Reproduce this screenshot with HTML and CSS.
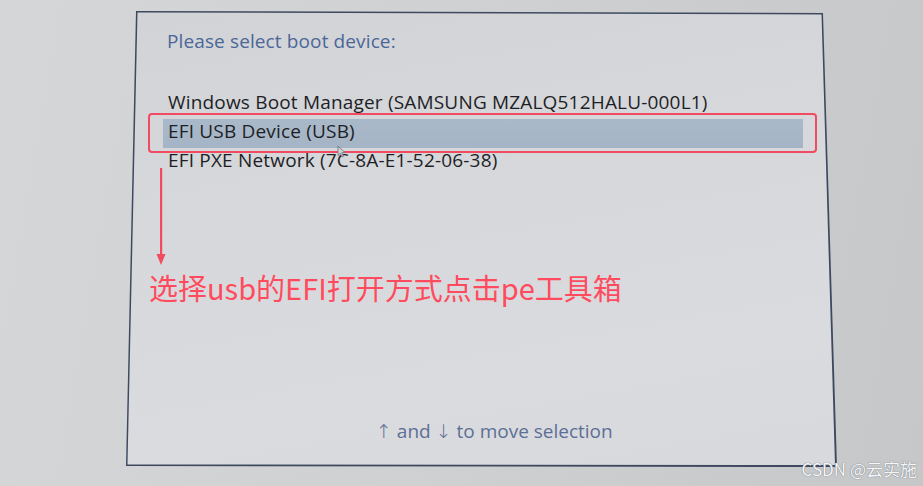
FILE: index.html
```html
<!DOCTYPE html>
<html lang="zh-CN">
<head>
<meta charset="utf-8">
<title>Boot device</title>
<link rel="stylesheet" href="styles.css">
</head>
<body>
<div class="screen">
  <div class="panel">
    <div class="title">Please select boot device:</div>
    <div class="list">
      <div class="item">Windows Boot Manager (SAMSUNG MZALQ512HALU-000L1)</div>
      <div class="item sel">EFI USB Device (USB)</div>
      <div class="item">EFI PXE Network (7C-8A-E1-52-06-38)</div>
    </div>
    <div class="note">选择usb的EFI打开方式点击pe工具箱</div>
    <div class="hint"><span class="arr">↑</span> and <span class="arr">↓</span> to move selection</div>

    <div class="redbox"></div>
    <svg class="redarrow" width="12" height="98" viewBox="0 0 12 98">
      <rect x="5" y="0" width="2.2" height="88" fill="#f24a5f"/>
      <polygon points="1.5,86 10.5,86 6,97" fill="#f24a5f"/>
    </svg>
    <svg class="cursor" width="9" height="13" viewBox="0 0 9 13">
      <path d="M1 1 L1 10.5 L3.3 8.4 L5 12 L6.4 11.3 L4.8 7.8 L8 7.6 Z" fill="#cfd3da" stroke="#6f7684" stroke-width="0.9" stroke-linejoin="round"/>
    </svg>
  </div>
</div>
<div class="watermark">CSDN @云实施</div>
</body>
</html>
```

FILE: styles.css
```css
html, body {
  margin: 0;
  padding: 0;
}
body {
  width: 923px;
  height: 486px;
  overflow: hidden;
  position: relative;
  background: linear-gradient(100deg, #d5d6d8 0%, #d0d1d3 45%, #c6c7c9 100%);
  font-family: "Open Sans", "Noto Sans", sans-serif;
}
.screen {
  padding: 11px 0 0 126px;
}
.panel {
  position: relative;
  width: 711px;
  height: 456px;
  box-sizing: border-box;
  padding-left: 42px;
  display: flex;
  flex-direction: column;
}
.panel::before {
  content: "";
  position: absolute;
  inset: 0;
  background: #3e4960;
  clip-path: polygon(10px 0, 697px 2px, 711px 456px, 0 455px);
  z-index: 0;
}
.panel::after {
  content: "";
  position: absolute;
  inset: 0;
  background: linear-gradient(170deg, #d2d3d6 0%, #d7d8db 40%, #dadbde 75%, #d8d9dc 100%);
  clip-path: polygon(11.5px 1.5px, 695.5px 3.5px, 709px 454px, 1.5px 453.5px);
  z-index: 0;
}
.panel > * {
  position: relative;
  z-index: 1;
}
.title {
  margin-top: 18px;
  font-size: 19px;
  letter-spacing: 0.12px;
  line-height: 24px;
  color: #4b6798;
  margin-left: -1px;
}
.list {
  margin-top: 35px;
}
.item {
  height: 29px;
  line-height: 29px;
  font-size: 19px;
  letter-spacing: 0.18px;
  color: #1e1f26;
  white-space: nowrap;
}
.item.sel {
  margin-left: -5px;
  padding-left: 5px;
  width: 635px;
  background: linear-gradient(to bottom, transparent 2px, #a9b9c9 2px, #a5b5c6 100%);
  box-shadow: 0 2px 0 0 #a5b5c6;
}
.note {
  margin-top: 94px;
  margin-left: -19px;
  font-family: "Noto Sans CJK SC", "Noto Sans", sans-serif;
  font-size: 29px;
  line-height: 36px;
  color: #ff4b5d;
  white-space: nowrap;
}
.hint {
  margin-top: auto;
  margin-bottom: 24px;
  margin-left: 208px;
  font-size: 19px;
  line-height: 24px;
  color: #5c6f97;
  white-space: nowrap;
}
.arr {
  font-family: "DejaVu Sans", sans-serif;
  font-weight: 200;
}
.redbox {
  position: absolute;
  left: 22px;
  top: 102px;
  width: 669px;
  height: 40px;
  box-sizing: border-box;
  border: 2px solid #f24a5f;
  border-radius: 4px;
  z-index: 2;
}
.redarrow {
  position: absolute;
  left: 29px;
  top: 157px;
  z-index: 2;
}
.cursor {
  position: absolute;
  left: 211px;
  top: 134px;
  z-index: 2;
}
.watermark {
  position: absolute;
  right: 6px;
  bottom: 5px;
  font-family: "Noto Sans CJK SC", "Liberation Sans", sans-serif;
  font-size: 17px;
  line-height: 24px;
  color: #f4f5f7;
  text-shadow: 0 0 1px #7d8088, 0 0 1px #7d8088;
}
```
